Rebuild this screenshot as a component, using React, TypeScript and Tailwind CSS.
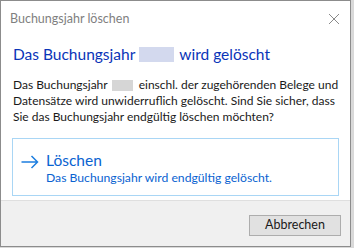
import React from "react";

export default function App() {
  return (
    <div className="w-[354px] h-[248px] bg-[#d9d9d9] overflow-hidden whitespace-nowrap" style={{ fontFamily: 'Lato, "Noto Sans", sans-serif' }}>
      <div className="w-[351px] h-[247px] bg-white border border-[#8c8c8c] flex flex-col">
        <div className="h-[34px] flex items-center justify-between pl-[9px] pr-[8px] pt-[1px]">
          <span className="text-[12.5px] leading-[16px] text-[#7f7f7f]">Buchungsjahr löschen</span>
          <svg width="12" height="12" viewBox="0 0 12 12" className="mr-[2px]">
            <path d="M1 1 L11 11 M11 1 L1 11" stroke="#8a8a8a" strokeWidth="1" fill="none" />
          </svg>
        </div>
        <div className="pl-[12px] pt-[9px] text-[15.5px] leading-[20px] text-[#0a34b8] flex items-center">
          <span>Das Buchungsjahr</span>
          <span className="inline-block shrink-0 w-[35px] h-[15px] bg-[#d3d9ee] ml-[4px] mr-[5px]" />
          <span>wird gelöscht</span>
        </div>
        <div className="pl-[12px] pr-[10px] pt-[13px] text-[12px] leading-[16px] text-[#1a1a1a]">
          <div className="flex items-center">
            <span>Das Buchungsjahr</span>
            <span className="inline-block shrink-0 w-[21px] h-[11px] bg-[#d6d6d6] ml-[4px] mr-[6px]" />
            <span>einschl. der zugehörenden Belege und</span>
          </div>
          <div>Datensätze wird unwiderruflich gelöscht. Sind Sie sicher, dass</div>
          <div>Sie das Buchungsjahr endgültig löschen möchten?</div>
        </div>
        <div className="mx-[11px] mt-[13px] h-[58px] border border-[#a9d6f5] flex items-start pt-[11px] pl-[8px]">
          <svg width="18" height="14" viewBox="0 0 18 14" className="mt-[5px] shrink-0">
            <path d="M0.5 7 H16.5 M10.5 1 L16.5 7 L10.5 13" stroke="#1d7ee0" strokeWidth="1.5" fill="none" />
          </svg>
          <div className="ml-[7px] text-[#0a63d1]">
            <div className="text-[15.5px] leading-[20px]">Löschen</div>
            <div className="text-[12.2px] leading-[16px]">Das Buchungsjahr wird endgültig gelöscht.</div>
          </div>
        </div>
        <div className="mt-auto h-[46px] bg-[#f0f0f0] border-t border-[#dfdfdf] flex items-start justify-end pr-[9px] pt-[14px]">
          <button className="w-[92px] h-[21px] bg-[#e1e1e1] border border-[#adadad] text-[12.5px] text-[#1a1a1a] leading-none">
            Abbrechen
          </button>
        </div>
      </div>
    </div>
  );
}
